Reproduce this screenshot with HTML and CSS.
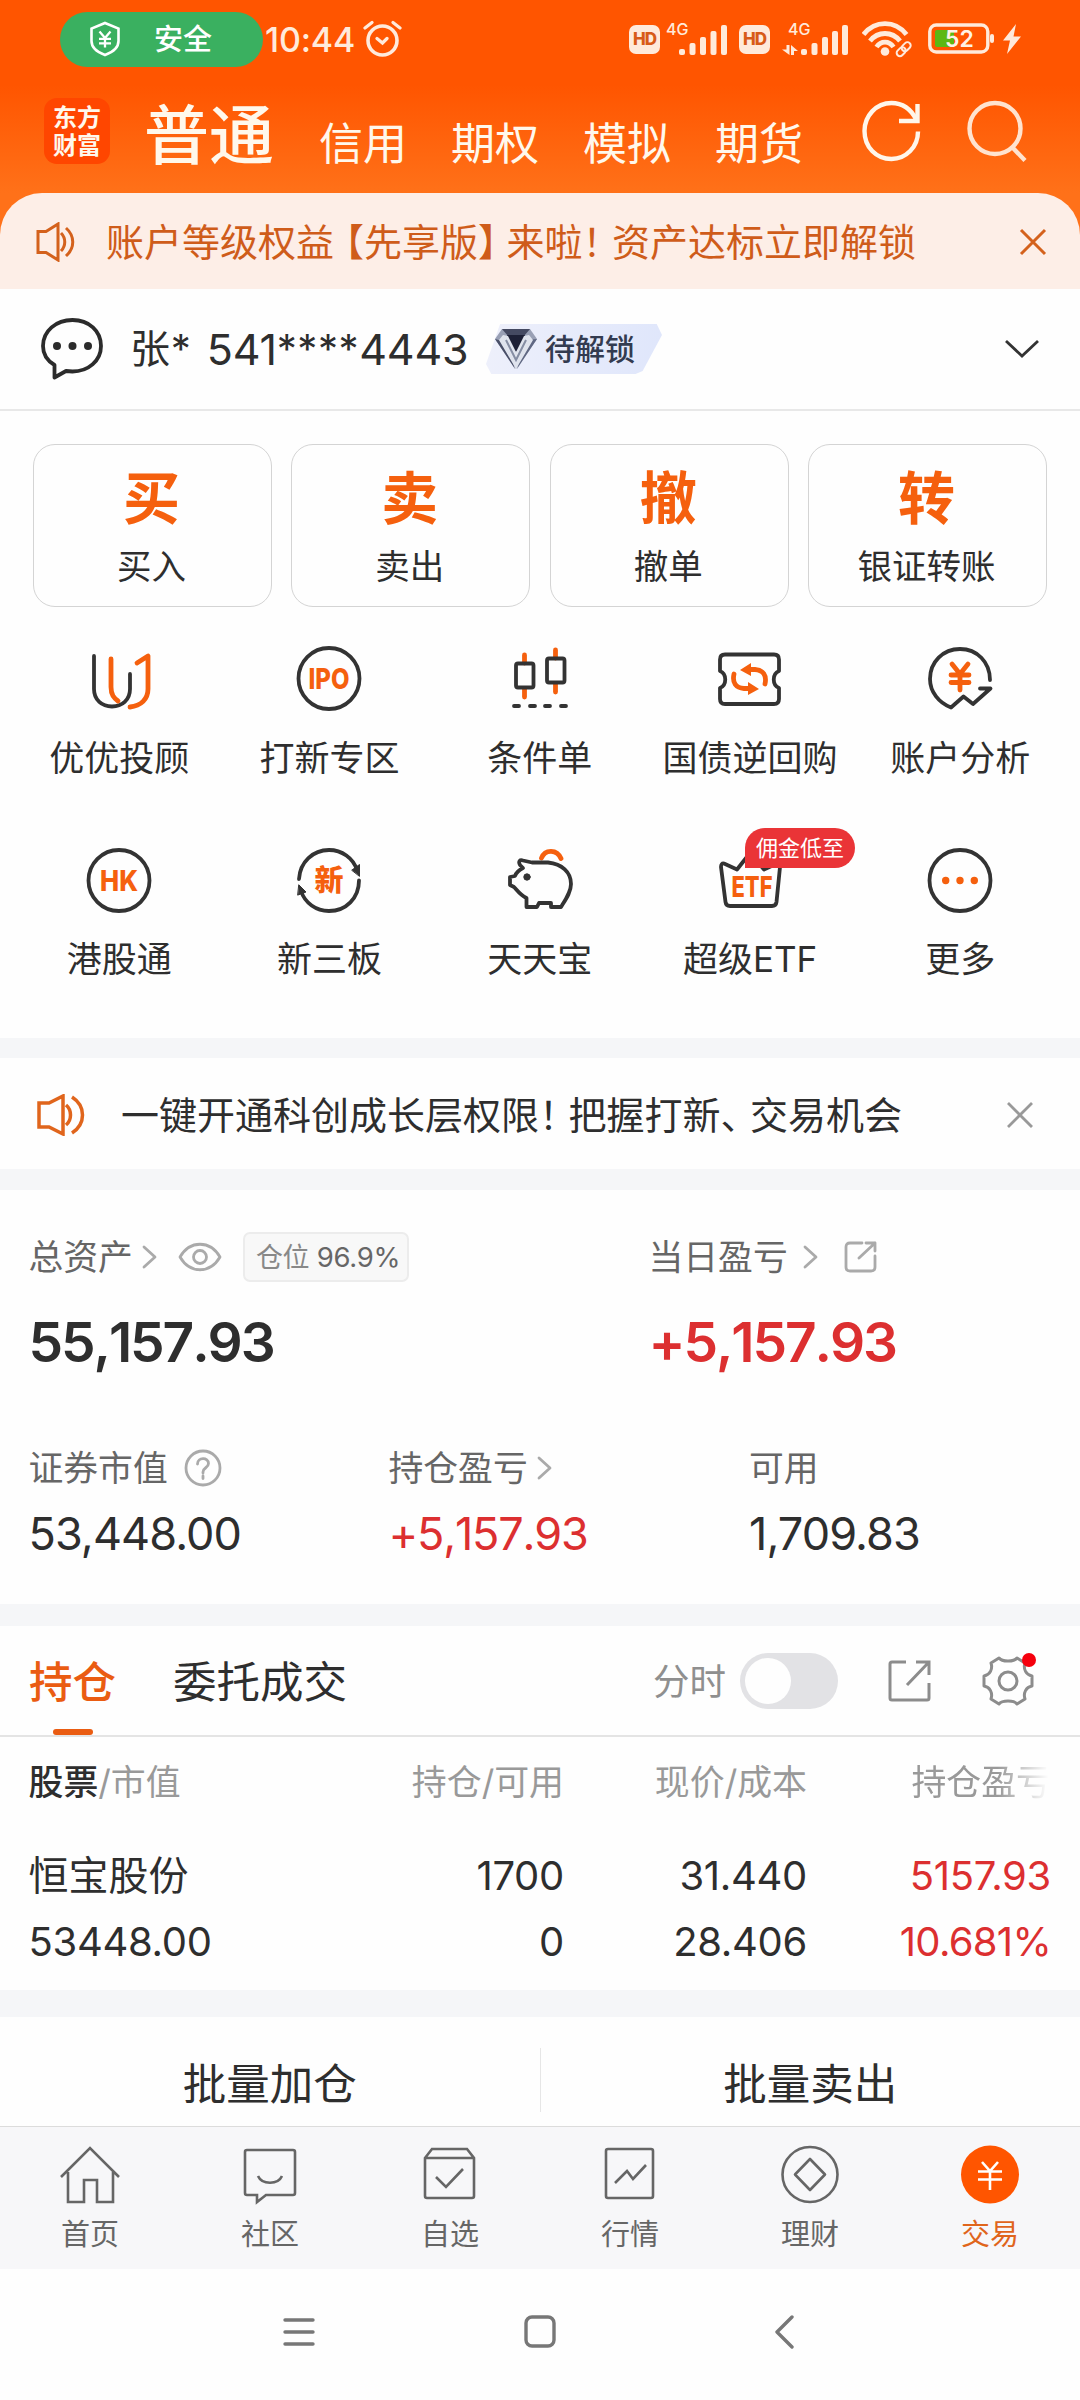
FILE: index.html
```html
<!DOCTYPE html>
<html lang="zh-CN">
<head>
<meta charset="utf-8">
<title>交易</title>
<link rel="stylesheet" href="styles.css">
</head>
<body>
<div class="top">
  <div class="status">
    <div class="safe-pill">
      <svg width="32" height="36" viewBox="0 0 32 36" fill="none" stroke="#fff" stroke-width="2.6"><path d="M16 2 L29.500 7.500 V20 C29.500 27 23 31.500 16 34 C9 31.500 2.500 27 2.500 20 V7.500 Z"/><path d="M10.500 10.500 L16 17 L21.500 10.500 M16 17 V26.500 M10 17.800 H22 M10 22.300 H22" stroke-width="2.300"/></svg>
      <span>安全</span>
    </div>
    <span class="time">10:44</span>
    <svg class="alarm" width="40" height="38" viewBox="0 0 40 38" fill="none" stroke="#ffeadb" stroke-width="3.600" stroke-linecap="round"><circle cx="19.500" cy="20.500" r="14.500"/><path d="M2 8 L9 2.500 M30 2.500 L37 8 M14 18.500 L19.500 23 L24 18.500" stroke-width="3.200"/></svg>
    <span class="hd hd-first">HD</span>
    <svg class="signal" width="64" height="44" viewBox="0 -4 64 44" fill="#ffeadb"><text x="1" y="14" class="net">4G</text><rect x="14" y="28" width="6" height="6" rx="2"/><rect x="24.500" y="22" width="6" height="12" rx="2"/><rect x="35" y="16" width="6" height="18" rx="2"/><rect x="45.500" y="10" width="6" height="24" rx="2"/><rect x="56" y="4" width="6" height="30" rx="2"/></svg>
    <span class="hd hd-second">HD</span>
    <svg class="signal2" width="68" height="44" viewBox="0 -4 68 44" fill="#ffeadb"><text x="6" y="14" class="net">4G</text><path d="M4.500 24 H7.500 V34 L0 28.500 H4.500 Z M9 24 L16 30 H12 V34 H9 Z"/><rect x="19" y="28" width="6" height="6" rx="2"/><rect x="29.500" y="22" width="6" height="12" rx="2"/><rect x="40" y="16" width="6" height="18" rx="2"/><rect x="50" y="10" width="6" height="24" rx="2"/><rect x="60" y="4" width="6" height="30" rx="2"/></svg>
    <svg class="wifi" width="52" height="38" viewBox="0 0 52 38" fill="none" stroke="#ffeadb" stroke-width="4.800"><path d="M1.500 14.500 C13 0 33 0 44.500 14.500 M8 21 C16 11 30 11 38 21 M14.500 27 C19 20.500 27 20.500 31.500 27"/><circle cx="23" cy="31.500" r="4.300" fill="#ffeadb" stroke="none"/><g stroke-width="2"><rect x="34" y="28.500" width="10" height="6.500" rx="3.200" transform="rotate(-45 39 31.500)"/><rect x="39" y="23.500" width="10" height="6.500" rx="3.200" transform="rotate(-45 44 26.500)"/></g></svg>
    <svg class="battery" width="68" height="34" viewBox="0 0 68 34"><rect x="1.800" y="3" width="58" height="27" rx="6.500" fill="none" stroke="#ffeadb" stroke-width="3.400"/><path d="M9 8 H26 V25 H9 Q7 25 7 23 V10 Q7 8 9 8 Z" fill="#5cb813"/><rect x="62" y="12" width="4" height="9" rx="2" fill="#ffeadb"/><text x="31.500" y="25" text-anchor="middle" class="pct">52</text></svg>
    <svg class="bolt" width="20" height="32" viewBox="0 0 20 32" fill="#ffeadb"><path d="M14 1 L1 17.500 H8 L5 31 L19 13.500 H11.500 Z"/></svg>
  </div>
  <div class="head">
    <div class="logo">东方<br>财富</div>
    <div class="account-tabs"><b>普通</b><span>信用</span><span>期权</span><span>模拟</span><span>期货</span></div>
    <svg class="refresh" width="60" height="62" viewBox="0 0 60 62" fill="none" stroke="#fff6ea" stroke-width="4.400"><path d="M56 31.500 C56 47 44 59 29.500 59 C14 59 2.500 47 2.500 31 C2.500 16 14 3 29.500 3 C40 3 49 9 54.500 20"/><path d="M55.500 4 V21 H37"/></svg>
    <svg class="search" width="62" height="64" viewBox="0 0 62 64" fill="none" stroke="#ffe3cf" stroke-width="4.400"><circle cx="29" cy="29.500" r="25.500"/><path d="M46 48 L59 61.500"/></svg>
  </div>
  <div class="vip-notice">
    <svg width="40" height="40" viewBox="0 0 40 40" fill="none" stroke="#d4611c" stroke-width="3"><path d="M2 9.500 H10 L22 2 V38 L10 30.500 H2 Z M25 11 C30 16 30 24 25 29 M30 6 C39 14 39 26 30 34"/></svg>
    <p>账户等级权<span class="tight">益</span>【先享版<span class="tight-r">】</span>来啦<span class="tight-x">！</span>资产达标立即解锁</p>
    <svg class="close1" width="28" height="28" viewBox="0 0 28 28" fill="none" stroke="#d4611c" stroke-width="3"><path d="M2 2 L26 26 M26 2 L2 26"/></svg>
  </div>
</div>

<div class="user">
  <svg width="64" height="62" viewBox="0 0 64 62" fill="none" stroke="#2b2b2b" stroke-width="3.800" stroke-linejoin="round"><path d="M13.500 47 C5 42 2 35 2 28 C2 13 15 2 31.500 2 C48 2 60 13 60 28 C60 43 47 53.500 31.500 53.500 L25 53 L13.500 59.500 Z"/><g fill="#2b2b2b" stroke="none"><circle cx="16" cy="28" r="4"/><circle cx="31.500" cy="28" r="4"/><circle cx="47" cy="28" r="4"/></g></svg>
  <span class="name">张* <i class="first">541</i><em>****</em><i>4443</i></span>
  <div class="badge">
    <svg width="44" height="46" viewBox="0 0 44 46"><path d="M8 3 H36 L43 13 L22 43 L1 13 Z" fill="#99a0b5"/><path d="M8 3 H36 L30 10 H14 Z" fill="#454a62"/><path d="M13 9 H31 L29 18 L22 26 L15 18 Z" fill="#1d2036"/><path d="M1 13 L12 16 L21 43 Z" fill="#4a5069"/><path d="M43 13 L32 14 L23 43 Z" fill="#606883"/><path d="M9 9 L14 10 L22 26 L30 10 L35 9 L39 14 L22 43 L5 14 Z" fill="#dfe3ed"/><path d="M12 14 L22 34 L32 14" fill="none" stroke="#858da3" stroke-width="2"/></svg>
    <span>待解锁</span>
  </div>
  <svg class="down" width="36" height="20" viewBox="0 0 36 20" fill="none" stroke="#333" stroke-width="2.800"><path d="M2 2 L18 17 L34 2"/></svg>
</div>

<div class="trade">
  <div class="cards">
    <div class="card"><b>买</b><span>买入</span></div>
    <div class="card"><b>卖</b><span>卖出</span></div>
    <div class="card"><b>撤</b><span>撤单</span></div>
    <div class="card"><b>转</b><span>银证转账</span></div>
  </div>
  <div class="grid">
    <div class="cell"><svg class="ico" viewBox="0 0 70 70"><path d="M10 13 V46 C10 57 18 63.500 28 63.500 S46 57 46 46 V31"/><path class="o" d="M27 16 V44 C27 52 30 55 34 58 M53 20 L64 13 V46 C64 56 57 63 46 64"/></svg><span>优优投顾</span></div>
    <div class="cell"><svg class="ico" viewBox="0 0 70 70"><circle cx="35" cy="35.500" r="30.500"/><text x="35" y="46" textLength="41" lengthAdjust="spacingAndGlyphs" class="glyph">IPO</text></svg><span>打新专区</span></div>
    <div class="cell"><svg class="ico" viewBox="0 0 70 70"><path class="o" d="M19.500 12 V20 M19.500 46 V54 M50.500 7 V15 M50.500 41 V49"/><rect x="11" y="20.500" width="17.500" height="24" rx="2"/><rect x="42" y="15.500" width="17.500" height="24" rx="2"/><path d="M9 63 H14 M25 63 H30 M40 63 H45 M56 63 H61"/></svg><span>条件单</span></div>
    <div class="cell"><svg class="ico" viewBox="0 0 70 70"><path d="M10 11.500 H59 Q64 11.500 64 16.500 V28 C57 31 57 42 64 45 V56 Q64 61 59 61 H10 Q5 61 5 56 V45 C12 42 12 31 5 28 V16.500 Q5 11.500 10 11.500 Z"/><path class="o" d="M19 31 C17 40 21 45 29 45.500 H34 M50 41 C52 32 48 27 40 26.500 H34"/><path class="of" d="M33 39 L44 46 L33 52 Z M36 20 L25 27 L36 33 Z"/></svg><span>国债逆回购</span></div>
    <div class="cell"><svg class="ico" viewBox="0 0 70 70"><path d="M65 37 C65 19 52 6 35 6 C18 6 5 19 5 36 C5 49 14 60 26 64.500 L38.500 53.500 L48 61 L65.500 45.500 H55"/><path class="o" d="M27 21 L35 31 L43 21 M35 31 V47 M26 32 H44 M26 39.500 H44"/></svg><span>账户分析</span></div>
    <div class="cell"><svg class="ico" viewBox="0 0 70 70"><circle cx="35" cy="35.500" r="30.500"/><text x="35" y="46" textLength="38" lengthAdjust="spacingAndGlyphs" class="glyph">HK</text></svg><span>港股通</span></div>
    <div class="cell"><svg class="ico" viewBox="0 0 70 70"><path d="M5 34 C6 17 19 5 35 5 C48 5 59 13 63 25 M65 35.500 C65 53 52 66 35 66 C22 66 11 58 7 46"/><path class="df" d="M58 25 L65.500 19.500 V31 Z M5 40 L12 47 L4 50 Z"/><text x="35" y="46" class="glyph zh">新</text></svg><span>新三板</span></div>
    <div class="cell"><svg class="ico" viewBox="0 0 70 70"><path class="o" d="M36.500 13 C40 4 52 4 56 13.500"/><path d="M15 20 C13 16 15 14.500 18 15.500 L27 17.500 H43 C57 19 66 27 66 39 C66 47 61 54 56 62 H46 V58 H34 L32 62 H21.500 V53 C15 50 12 45 9 42 L5 40 V32 L10 31 C11 28 14 25 18 23 Z"/><circle class="df" cx="22" cy="32" r="3.200"/></svg><span>天天宝</span></div>
    <div class="cell"><svg class="ico" viewBox="0 0 70 70"><path d="M9 18.500 L22 24.500 L35 8 L49 24.500 L62 18.500 Q66 18 65 22 L61.500 57 Q61 61 57 61 H15 Q11 61 10.500 57 L6 22 Q6 18 9 18.500 Z"/><text x="37" y="52" textLength="41" lengthAdjust="spacingAndGlyphs" class="glyph">ETF</text></svg><span>超级ETF</span><i class="tag">佣金低至</i></div>
    <div class="cell"><svg class="ico" viewBox="0 0 70 70"><circle cx="35" cy="35.500" r="30.500"/><path class="of" d="M17 35.500 a3.700 3.700 0 1 0 7.400 0 a3.700 3.700 0 1 0 -7.400 0 M31.300 35.500 a3.700 3.700 0 1 0 7.400 0 a3.700 3.700 0 1 0 -7.400 0 M45.600 35.500 a3.700 3.700 0 1 0 7.400 0 a3.700 3.700 0 1 0 -7.400 0"/></svg><span>更多</span></div>
  </div>
</div>

<div class="band band-a"></div>
<div class="star-notice">
  <svg width="48" height="42" viewBox="0 0 48 42" fill="none" stroke="#e0651c" stroke-width="3.500"><path d="M2 9 H12 L26 2 V40 L12 33 H2 Z M29 11 C35 16 35 26 29 31 M35 3 C49 12 49 30 35 39"/></svg>
  <p>一键开通科创成长层权限<span class="tight-x">！</span>把握打新<span class="tight-x">、</span>交易机会</p>
  <svg class="close2" width="28" height="28" viewBox="0 0 28 28" fill="none" stroke="#999" stroke-width="2.800"><path d="M2 2 L26 26 M26 2 L2 26"/></svg>
</div>
<div class="band band-b"></div>

<div class="assets">
  <div class="two">
    <div class="label">总资产<svg class="gt" viewBox="0 0 16 24"><path d="M2 2 L13 12 L2 22"/></svg>
      <svg class="eye" width="44" height="30" viewBox="0 0 44 30"><path d="M2 15 C12 -2 32 -2 42 15 C32 32 12 32 2 15 Z"/><circle cx="22" cy="15" r="6.500"/></svg>
      <span class="ratio"><span>仓位</span> 96.9%</span></div>
    <div class="label">当日盈亏<svg class="gt gt-day" viewBox="0 0 16 24"><path d="M2 2 L13 12 L2 22"/></svg>
      <svg class="share-s" width="34" height="34" viewBox="0 0 34 34"><path d="M18 3 H6 Q2 3 2 7 V27 Q2 31 6 31 H27 Q31 31 31 27 V16 M22 3 H31 V11 M31 3 L15 18"/></svg></div>
  </div>
  <div class="two big"><span>55,157.93</span><span class="red">+5,157.93</span></div>
  <div class="three">
    <div class="label">证券市值<svg class="help" width="40" height="40" viewBox="0 0 40 40"><circle cx="20" cy="20" r="17"/><path d="M14.500 16 C14.500 9 25.500 9 25.500 15.500 C25.500 20 20 19.500 20 24 V25 M20 28 V30.500"/></svg></div>
    <div class="label">持仓盈亏<svg class="gt gt-pos" viewBox="0 0 16 24"><path d="M2 2 L13 12 L2 22"/></svg></div>
    <div class="label">可用</div>
  </div>
  <div class="three mid"><span>53,448.00</span><span class="red gain">+5,157.93</span><span>1,709.83</span></div>
</div>
<div class="band band-c"></div>

<div class="tabs">
  <div class="tab on">持仓</div>
  <div class="tab">委托成交</div>
  <span class="fs">分时</span>
  <div class="toggle"></div>
  <svg class="share" width="44" height="44" viewBox="0 0 44 44" fill="none" stroke="#8c8c8c" stroke-width="3"><path d="M18 3 H4 Q2 3 2 5 V39 Q2 41 4 41 H39 Q41 41 41 39 V24 M28 3 H41 V16 M41 3 L19 26"/></svg>
  <div class="gear">
    <svg width="52" height="52" viewBox="0 0 52 52" fill="none" stroke="#8c8c8c" stroke-width="3"><path d="M17 3 C20 7 32 7 35 3 L43 8 C41 14 44 20 50 21 V31 C44 32 41 38 43 44 L35 49 C32 45 20 45 17 49 L9 44 C11 38 8 32 2 31 V21 C8 20 11 14 9 8 Z" stroke-linejoin="round"/><circle cx="26" cy="26" r="9"/></svg>
    <i></i>
  </div>
</div>

<div class="table">
  <div class="tr th"><span><b>股票</b>/市值</span><span>持仓/可用</span><span>现价/成本</span><span class="fade">持仓盈亏</span></div>
  <div class="tr r1"><span class="stock">恒宝股份</span><span>1700</span><span>31.440</span><span class="red">5157.93</span></div>
  <div class="tr r2"><span>53448.00</span><span>0</span><span>28.406</span><span class="red pct-gain">10.681%</span></div>
</div>
<div class="band band-d"></div>
<div class="batch"><span>批量加仓</span><i></i><span>批量卖出</span></div>

<div class="tabbar">
  <div><svg viewBox="0 0 60 60"><path d="M1 32 L30 3 L59 32 M8 27 V57 H24 V35 H37 V57 H53 V27"/></svg>首页</div>
  <div><svg viewBox="0 0 60 60"><path d="M7 5 H53 Q55 5 55 7 V48 Q55 50 53 50 H26 L17 57 V50 H7 Q5 50 5 48 V7 Q5 5 7 5 Z M18 31 C22 40 38 40 42 31"/></svg>社区</div>
  <div><svg viewBox="0 0 60 60"><path d="M5 13 L12 4 H47 L54 13 V51 Q54 53 52 53 H7 Q5 53 5 51 Z M5 13 H54 M16 32 L26 42 L43 24"/></svg>自选</div>
  <div><svg viewBox="0 0 60 60"><path d="M8 4 H51 Q53 4 53 6 V51 Q53 53 51 53 H8 Q6 53 6 51 V6 Q6 4 8 4 Z M15 38 L27 26 L33 34 L46 20"/></svg>行情</div>
  <div><svg viewBox="0 0 60 60"><circle cx="30" cy="29.500" r="27.500"/><path d="M30 14 L45 29.500 L30 45 L15 29.500 Z" stroke-linejoin="round"/></svg>理财</div>
  <div class="on"><svg viewBox="0 0 60 60"><circle cx="30" cy="29.500" r="29" fill="#ff5500" stroke="none"/><path d="M22 17 L30 26 L38 17 M30 26 V45 M18 26.500 H42 M18 34.500 H42" stroke="#fff" stroke-width="2.600"/></svg>交易</div>
</div>
<div class="sysnav">
  <svg width="32" height="36" viewBox="0 0 32 36"><path d="M2 6 H30 M2 18 H30 M2 30 H30"/></svg>
  <svg width="32" height="36" viewBox="0 0 32 36"><rect x="2" y="3" width="28" height="29" rx="6"/></svg>
  <svg width="20" height="36" viewBox="0 0 20 36"><path d="M18 3 L3 18 L18 33"/></svg>
</div>
</body>
</html>
```
FILE: styles.css
```css
* { box-sizing: border-box; }
body {
  margin: 0;
  width: 1080px;
  height: 2400px;
  overflow: hidden;
  background: #fefefe;
  color: #2e2e2e;
  font-family: Inter, "Noto Sans CJK SC", sans-serif;
  line-height: 1;
  white-space: nowrap;
}
svg { display: block; flex: none; }
p { margin: 0; }
i, em { font-style: normal; }
.red { color: #dc2f30; }

/* header */
.top { height: 289px; background: linear-gradient(#ff5500 85px, #ff7119 193px); }
.status { height: 85px; padding: 0 0 7px 60px; display: flex; align-items: center; color: #ffeadb; }
.safe-pill { width: 203px; height: 55px; border-radius: 28px; background: #3ab060; display: flex; align-items: center; gap: 33px; padding-left: 29px; color: #fff; font-size: 29px; font-weight: 500; }
.time { margin-left: 2px; width: 95px; font-size: 34px; font-weight: 500; letter-spacing: -0.2px; padding-top: 2px; }
.alarm { margin-left: 3px; }
.hd { width: 31px; height: 29px; border-radius: 7px; background: #ffeadb; color: #d85a18; font-size: 17px; font-weight: 800; text-align: center; line-height: 29px; letter-spacing: -1px; }
.hd-first { margin-left: 226px; }
.signal { margin-left: 5px; }
.hd-second { margin-left: 10px; }
.signal2 { margin-left: 12px; }
.wifi { margin-left: 12px; }
.battery { margin-left: 14px; }
.bolt { margin-left: 6px; }
.net { font-size: 16px; font-weight: 500; }
.pct { font-size: 23px; font-weight: 600; fill: #fff3e6; }

.head { height: 108px; padding-left: 44px; display: flex; align-items: flex-start; color: #fff8ec; }
.logo { width: 66px; height: 66px; margin-top: 13px; border-radius: 13px; background: #ff4600; font-size: 24px; line-height: 28px; font-weight: 700; text-align: center; padding-top: 6px; }
.account-tabs { display: flex; align-items: flex-end; gap: 44px; margin-left: 34px; height: 81px; font-size: 44px; width: 688px; }
.account-tabs b { font-size: 65px; font-weight: 500; margin: 0 1px -2px 0; }
.refresh { margin-top: 15px; margin-left: 30px; }
.search { margin-top: 14px; margin-left: 44px; }

.vip-notice { height: 96px; border-radius: 42px 42px 0 0; background: #fdeee7; display: flex; align-items: center; padding: 2px 33px 0 36px; color: #cf5c1a; font-size: 38px; }
.vip-notice p { margin-left: 30px; flex: 1; }
.tight { letter-spacing: -8px; }
.tight-r { letter-spacing: -9.500px; }
.tight-x { letter-spacing: -8.500px; }

/* account */
.user { height: 122px; border-bottom: 2px solid #e8e8e8; display: flex; align-items: center; padding-left: 41px; }
.name { margin-left: 25px; width: 352px; font-size: 40px; display: flex; align-items: center; white-space: pre; letter-spacing: 0.800px; }
.name i { font-size: 43px; letter-spacing: -0.200px; }
.name .first { margin-left: 3px; }
.name em { letter-spacing: 0.600px; }
.badge { width: 176px; height: 50px; margin-left: 4px; display: flex; align-items: center; padding-left: 8px; gap: 7px; background: linear-gradient(100deg, #eef0fb, #dfe6fb); clip-path: polygon(8% 0, 97% 0, 100% 22%, 89% 94%, 85% 100%, 3% 100%, 0 80%); color: #333b50; font-size: 30px; font-weight: 500; }
.down { margin-left: 342px; }

/* trade */
.trade { height: 627px; padding-top: 33px; }
.cards { display: grid; grid-template-columns: repeat(4, 1fr); gap: 19.5px; padding: 0 33px; }
.card { height: 163px; border: 1.5px solid #d4d4d4; border-radius: 22px; display: flex; flex-direction: column; align-items: center; padding: 25px 2px 0 0; }
.card b { font-size: 57px; font-weight: 700; color: #f5600e; }
.card span { font-size: 34.5px; margin-top: 23px; }
.grid { display: grid; grid-template-columns: repeat(5, 210.300px); grid-template-rows: 201.500px 202px; padding: 36px 14px 0; }
.cell { position: relative; display: flex; flex-direction: column; align-items: center; font-size: 35px; }
.ico { width: 70px; height: 70px; margin-bottom: 27.500px; fill: none; stroke: #333; stroke-width: 3.800; stroke-linecap: round; stroke-linejoin: round; }
.ico .o { stroke: #f5600e; stroke-width: 4.800; }
.ico .of { fill: #f5600e; stroke: none; }
.ico .df { fill: #333; stroke-width: 1; }
.glyph { font-size: 28.500px; font-weight: 800; fill: #f5600e; stroke: none; text-anchor: middle; }
.zh { font-size: 29px; }
.tag { position: absolute; left: 100px; top: -17px; width: 110px; height: 40px; border-radius: 20px 20px 20px 0; background: #ea3437; color: #fff; font-size: 22px; line-height: 41px; text-align: center; }

.band { background: #f5f6f8; }
.band-a { height: 20px; }
.band-b { height: 21px; }
.band-c { height: 22px; }
.band-d { height: 27px; }

.star-notice { height: 111px; display: flex; align-items: center; padding: 3px 46px 0 37px; font-size: 38px; }
.star-notice p { margin-left: 36px; flex: 1; }

/* assets */
.assets { height: 414px; padding: 42px 30px 0 28.500px; }
.two { display: grid; grid-template-columns: 620px 1fr; }
.three { display: grid; grid-template-columns: 360px 360.500px 1fr; }
.label { display: flex; align-items: center; height: 50px; font-size: 34.800px; color: #666; }
.label svg { fill: none; stroke: #aaa; stroke-width: 2.800; stroke-linecap: round; stroke-linejoin: round; }
.gt { width: 16px; height: 24px; margin-left: 9px; }
.gt-day { margin-left: 15px; }
.eye { margin-left: 20px; }
.share-s { margin-left: 25px; }
.help { margin-left: 15px; }
.ratio { margin-left: 21px; height: 50px; width: 166px; border: 2px solid #ececec; border-radius: 7px; background: #f8f8f8; font-size: 27.500px; line-height: 47px; padding-left: 11px; letter-spacing: -0.300px; }
.ratio span { color: #888; font-size: 27px; }
.big { margin-top: 33px; font-size: 55px; font-weight: 600; letter-spacing: -2.100px; font-kerning: none; height: 55px; }
.assets .three { margin-top: 73px; }
.assets .mid { margin-top: 18px; font-size: 45px; letter-spacing: -0.900px; }
.assets .gain { font-kerning: none; letter-spacing: -1.200px; }

/* holdings */
.tabs { height: 111px; border-bottom: 2px solid #e4e4e4; display: flex; align-items: center; padding-left: 29px; }
.tab { position: relative; top: 2px; font-size: 43.500px; margin-right: 57px; }
.tab.on { color: #ea5c12; font-weight: 500; }
.tab.on::after { content: ""; position: absolute; left: 24px; top: 68px; width: 40px; height: 6px; border-radius: 3px; background: #ea5c12; }
.fs { margin-left: 249px; padding-top: 3px; font-size: 36.500px; color: #8f8f8f; }
.toggle { width: 98px; height: 56px; border-radius: 28px; background: #e2e2e5; margin-left: 14px; padding: 5px; }
.toggle::before { content: ""; display: block; width: 46px; height: 46px; border-radius: 50%; background: #fefefe; }
.share { margin-left: 50px; }
.gear { position: relative; margin-left: 50px; }
.gear i { position: absolute; right: -2px; top: -2px; width: 14px; height: 14px; border-radius: 50%; background: #f5000d; }

.table { height: 253px; padding: 20px 29px 0 28.500px; }
.tr { display: grid; grid-template-columns: 301.500px 234px 243px 1fr; align-items: center; font-size: 40px; letter-spacing: -0.300px; }
.tr span + span { text-align: right; }
.th { height: 50px; font-size: 34.900px; color: #999; letter-spacing: 0; }
.th b { font-weight: 500; color: #2e2e2e; }
.tr .fade { justify-self: end; -webkit-mask-image: linear-gradient(90deg, #000 62%, transparent 98%); mask-image: linear-gradient(90deg, #000 62%, transparent 98%); }
.r1 { height: 66px; margin-top: 36px; }
.r2 { height: 66px; }
.tr .stock { letter-spacing: 0; }
.tr .pct-gain { letter-spacing: -0.700px; }

.batch { height: 109px; display: flex; align-items: center; font-size: 43.500px; padding-top: 26px; }
.batch span { flex: 1; text-align: center; }
.batch i { width: 1px; height: 64px; background: #e6e6e6; margin-bottom: 10px; }

.tabbar { height: 143px; border-top: 1.500px solid #dcdcdc; background: #f7f7f9; display: grid; grid-template-columns: repeat(6, 1fr); color: #666; font-size: 29px; text-align: center; padding-top: 18px; }
.tabbar svg { width: 60px; height: 60px; margin: 0 auto 15px; fill: none; stroke: #666; stroke-width: 2.600; }
.tabbar .on { color: #e0651c; }
.sysnav { height: 131px; display: flex; padding: 45px 0 0 283px; }
.sysnav svg { fill: none; stroke: #777; stroke-width: 3.400; stroke-linecap: round; stroke-linejoin: round; }
.sysnav svg + svg { margin-left: 209px; }
.sysnav svg + svg + svg { margin-left: 218px; }
```
